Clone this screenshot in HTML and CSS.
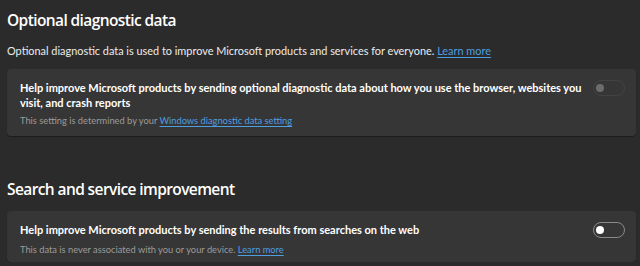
FILE: index.html
```html
<!DOCTYPE html>
<html lang="en">
<head>
    <meta charset="UTF-8">
    <title>Privacy settings</title>
    <link rel="stylesheet" href="styles.css">
</head>
<body>
    <div class="page">
        <h2 class="section-title">Optional diagnostic data</h2>
        <p class="section-desc">Optional diagnostic data is used to improve Microsoft products and services for everyone. <a href="#" class="link">Learn more</a></p>

        <div class="card">
            <div class="card-text">
                <div class="card-label">Help improve Microsoft products by sending optional diagnostic data about how you use the browser, websites you visit, and crash reports</div>
                <div class="card-sub">This setting is determined by your <a href="#" class="link">Windows diagnostic data setting</a></div>
            </div>
            <span class="toggle disabled"><span class="knob"></span></span>
        </div>

        <h2 class="section-title second">Search and service improvement</h2>

        <div class="card short">
            <div class="card-text">
                <div class="card-label">Help improve Microsoft products by sending the results from searches on the web</div>
                <div class="card-sub">This data is never associated with you or your device. <a href="#" class="link">Learn more</a></div>
            </div>
            <span class="toggle"><span class="knob"></span></span>
        </div>
    </div>
</body>
</html>
```

FILE: styles.css
```css
body {
    margin: 0;
    background-color: #2b2b2b;
    color: #ffffff;
    font-family: 'Lato', sans-serif;
}
.page {
    padding: 0 4px 0 7px;
}
.section-title {
    margin: 0;
    padding-top: 7px;
    font-family: 'Open Sans', sans-serif;
    font-size: 15.5px;
    font-weight: 600;
    letter-spacing: -0.6px;
    line-height: 26px;
}
.section-title.second {
    padding-top: 0;
    margin-top: 40px;
    margin-bottom: 9px;
}
.section-desc {
    margin: 10px 0 10px;
    font-size: 10.9px;
    line-height: 16px;
    color: #ececec;
}
.link {
    color: #4f9ee0;
    text-decoration: underline;
    text-underline-offset: 2px;
}
.card {
    display: flex;
    align-items: flex-start;
    gap: 8px;
    padding: 11px 11px 8px 13px;
    background-color: #363636;
    border-radius: 4px;
    box-shadow: 0 1px 1px rgba(0, 0, 0, 0.35);
}
.card.short {
    padding-bottom: 5px;
}
.card-text {
    flex: 1;
}
.card-label {
    font-size: 11px;
    font-weight: 700;
    line-height: 15px;
}
.card-sub {
    margin-top: 4px;
    font-size: 9.3px;
    line-height: 14px;
    color: #9c9c9c;
}
.card.short .card-sub {
    margin-top: 6px;
}
.toggle {
    box-sizing: border-box;
    display: flex;
    align-items: center;
    flex: none;
    width: 32px;
    height: 16px;
    padding: 0 2px;
    border: 1px solid #8a8a8a;
    border-radius: 8px;
}
.knob {
    width: 8px;
    height: 8px;
    border-radius: 50%;
    background-color: #ffffff;
}
.toggle.disabled {
    border-color: #434343;
}
.toggle.disabled .knob {
    background-color: #6c6c6c;
}
```
